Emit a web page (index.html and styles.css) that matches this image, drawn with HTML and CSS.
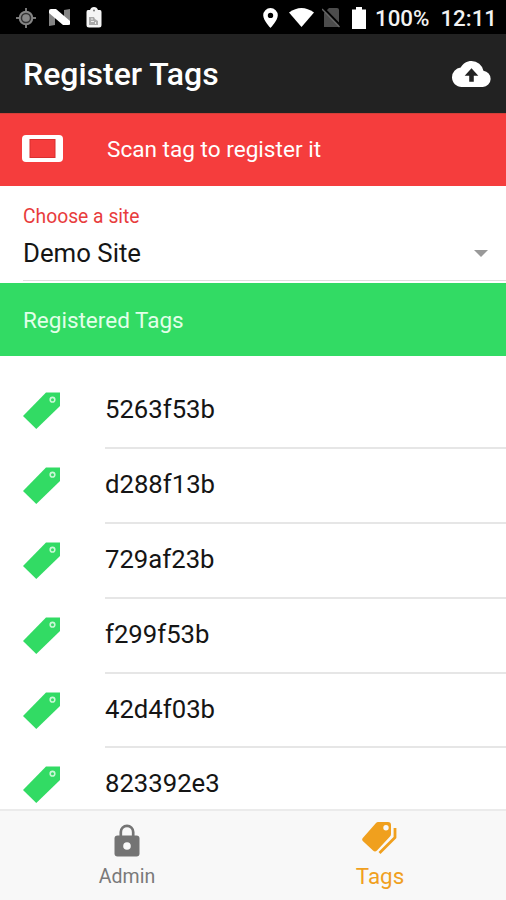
FILE: index.html
```html
<!DOCTYPE html>
<html lang="en">
<head>
<meta charset="utf-8">
<title>Register Tags</title>
<link rel="stylesheet" href="styles.css">
</head>
<body>
<svg class="defs" width="0" height="0" aria-hidden="true">
  <symbol id="tag" viewBox="0 0 37 37">
    <path fill="#32db64" d="M23 0.500H37V14L13.300 37L0 24Z"/>
    <circle cx="29.500" cy="7.700" r="2.300" fill="none" stroke="#c9f7d5" stroke-width="1.600"/>
  </symbol>
</svg>
<div class="app">
  <div class="status">
    <svg class="s-gps" viewBox="0 0 20 20"><path stroke="#777" stroke-width="2" d="M10 0V20M0 10H20"/><circle cx="10" cy="10" r="6.300" fill="#333" stroke="#858585" stroke-width="2"/><circle cx="10" cy="10" r="3.800" fill="#888"/></svg>
    <svg class="s-n" viewBox="0 0 22 17"><path fill="#858585" d="M0 2L6 4V16L0 17ZM15 1L21 0V16L15 13Z"/><path fill="#fff" d="M0 1.500Q0 0 2 0H7L21 12V14.500Q21 16 19 16H14L0 4Z"/></svg>
    <svg class="s-bag" viewBox="0 0 16 21"><path fill="#f5f5f5" d="M2 3H4Q5 0 8 0T12 3H14Q15.500 3 15.500 5V18Q15.500 20.500 13 20.500H3Q.5 20.500 .5 18V5Q.5 3 2 3Z"/><circle cx="8" cy="3.500" r="1" fill="#777"/><path fill="#aaa" d="M3 10H8L9 12L12 14V18H3Z"/><path fill="none" stroke="#eee" d="M5 12H7M5 14.500H8M9.500 15V17"/></svg>
    <svg class="s-pin" viewBox="0 0 15 20"><path fill="#fff" fill-rule="evenodd" d="M7.500 0A7.300 7.300 0 0 0 .2 7.300C.2 12.500 7.500 20 7.500 20S14.800 12.500 14.800 7.300A7.300 7.300 0 0 0 7.500 0ZM7.500 4.700A2.700 2.700 0 1 1 7.500 10.100A2.700 2.700 0 0 1 7.500 4.700Z"/></svg>
    <svg class="s-wifi" viewBox="0 0 25 19"><path fill="#fff" d="M0 4.500Q12.500-4.500 25 4.500L12.500 19Z"/></svg>
    <svg class="s-sim" viewBox="0 0 18 20"><path fill="#4c4c4c" d="M7 0H15Q17 0 17 2V19H2V5Z"/><path stroke="#000" stroke-width="2" d="M1.500 0L18 17"/><path stroke="#666" stroke-width="1.500" d="M0 1L17.500 19"/></svg>
    <svg class="s-bat" viewBox="0 0 14 22"><path fill="#fff" d="M4 0H10V2.500H14V22H0V2.500H4Z"/></svg>
    <span class="pct">100%</span><span class="clock">12:11</span>
  </div>
  <header class="header">
    <h1>Register Tags</h1>
    <svg class="cloud" viewBox="0 0 24 16"><path fill="#fff" d="M19.350 6.040A7.490 7.490 0 0 0 12 0C9.110 0 6.600 1.640 5.350 4.040A5.990 5.990 0 0 0 0 10C0 13.310 2.690 16 6 16H19A5 5 0 0 0 19.350 6.040Z"/><path fill="#222" d="M12 4.500L16.200 9H13.400V12.800H10.600V9H7.800Z"/></svg>
  </header>
  <div class="scan">
    <svg class="tablet" viewBox="0 0 41 27"><rect width="41" height="27" rx="4" fill="#fff"/><rect x="8" y="4.500" width="25" height="18" fill="#f53d3d" stroke="#d92f2f"/></svg>
    <span>Scan tag to register it</span>
  </div>
  <section class="select">
    <label>Choose a site</label>
    <div class="value"><span>Demo Site</span><i class="caret"></i></div>
  </section>
  <h2 class="divider">Registered Tags</h2>
  <ul class="list">
    <li><svg><use href="#tag"/></svg><span>5263f53b</span></li>
    <li><svg><use href="#tag"/></svg><span>d288f13b</span></li>
    <li><svg><use href="#tag"/></svg><span>729af23b</span></li>
    <li><svg><use href="#tag"/></svg><span>f299f53b</span></li>
    <li><svg><use href="#tag"/></svg><span>42d4f03b</span></li>
    <li><svg><use href="#tag"/></svg><span>823392e3</span></li>
  </ul>
  <nav class="tabs">
    <a class="tab">
      <svg class="lock" viewBox="0 0 26 32"><path fill="none" stroke="#747474" stroke-width="2.700" d="M6.800 12V7.500A6.200 6.200 0 0 1 19.200 7.500V12"/><rect x=".5" y="11" width="25" height="21" rx="3" fill="#747474"/><circle cx="13" cy="21.500" r="3.800" fill="#f8f8f8"/></svg>
      <span>Admin</span>
    </a>
    <a class="tab active">
      <svg class="tags" viewBox="0 0 35 32"><path fill="#f0a01e" fill-rule="evenodd" d="M16 0H26Q29 0 29 3V12Q29 13.500 28 14.500L15 28.500Q13 30.500 11 28.500L.8 19Q-.5 17.500 .8 16L14 1Q15 0 16 0ZM24 3A2.700 2.700 0 1 0 24 8.400A2.700 2.700 0 0 0 24 3Z"/><path fill="none" stroke="#f0a01e" stroke-width="2.800" stroke-linejoin="round" d="M33 6V15.500L17.500 31"/></svg>
      <span>Tags</span>
    </a>
  </nav>
</div>
</body>
</html>
```
FILE: styles.css
```css
* { box-sizing: border-box; }
body { margin: 0; background: #fff; font-family: Roboto, "Liberation Sans", sans-serif; color: #151515; }
svg { display: block; flex: none; }
.defs { position: absolute; }
.app { width: 506px; height: 900px; display: flex; flex-direction: column; overflow: hidden; }
.app > * { flex: none; }
.status { height: 34px; background: #000; color: #f2f2f2; display: flex; align-items: center; padding: 1px 9px 0 16px; font-size: 22.3px; font-weight: 500; }
.s-gps { width: 20px; height: 20px; margin-right: 13px; }
.s-n { width: 22px; height: 17px; margin-right: 15px; }
.s-bag { width: 16px; height: 21px; margin-right: 161px; }
.s-pin { width: 15px; height: 20px; margin-right: 11px; }
.s-wifi { width: 25px; height: 19px; margin-right: 8px; }
.s-sim { width: 18px; height: 20px; margin-right: 12px; }
.s-bat { width: 14px; height: 22px; margin-right: 9px; }
.clock { margin-left: auto; }
.header { height: 79px; background: #222; display: flex; align-items: center; justify-content: space-between; padding: 0 15px 0 23px; }
h1 { margin: 0; color: #fff; font-size: 32px; font-weight: 500; line-height: 36px; }
.cloud { width: 39px; height: 26px; margin-top: 1px; }
.scan { height: 73px; background: #f53d3d; color: #fff; display: flex; align-items: center; gap: 44px; padding-left: 22px; font-size: 22.6px; border-top: 1px solid #d33f38; }
.scan span { padding-bottom: 2px; }
.tablet { width: 41px; height: 27px; margin-bottom: 3px; }
.select { height: 97px; padding: 20px 0 2px 23px; display: flex; flex-direction: column; }
label { color: #e83c3c; font-size: 19.3px; line-height: 22px; }
.value { flex: 1; display: flex; align-items: center; justify-content: space-between; padding-right: 18px; font-size: 25.8px; border-bottom: 1px solid #dedede; }
.value span { padding-bottom: 3px; }
.caret { border: 7px solid transparent; border-top-color: #999; border-bottom: 0; margin-bottom: 2px; }
.divider { margin: 0; height: 73px; line-height: 75px; padding-left: 23px; background: #32db64; color: #e2ffe9; font-size: 22.5px; font-weight: 400; }
.list { margin: 0; padding: 18px 0 0; list-style: none; height: 453px; overflow: hidden; }
.list li { height: 74.9px; display: flex; align-items: center; padding-left: 23px; gap: 45px; }
.list svg { width: 37px; height: 37px; margin-bottom: 2px; }
.list span { flex: 1; height: 100%; line-height: 71px; font-size: 25.7px; border-bottom: 2px solid #e6e6e6; }
.tabs { height: 91px; background: #f8f8f8; border-top: 2px solid #ebebeb; display: flex; }
.tab { flex: 1; display: flex; flex-direction: column; align-items: center; color: #7a7a7a; font-size: 19.5px; line-height: 26px; }
.lock { width: 26px; height: 33px; margin: 13px 0 7px; }
.tags { width: 35px; height: 32px; margin: 11px 0 9px; }
.active { color: #f0a01e; font-size: 22.4px; }
.tab span { padding-left: 1px; }
```
